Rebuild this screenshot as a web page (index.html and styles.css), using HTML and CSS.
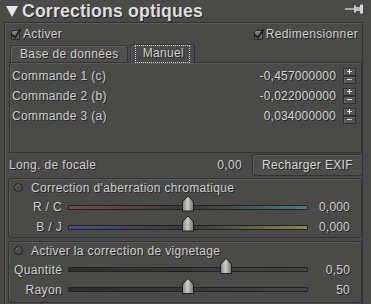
FILE: index.html
```html
<!DOCTYPE html>
<html lang="fr">
<head>
<meta charset="utf-8">
<link rel="stylesheet" href="styles.css">
</head>
<body>
<div class="app">
  <div class="title">
    <span class="tri"></span>
    <span class="title-text">Corrections optiques</span>
    <svg class="pin" width="20" height="10" viewBox="0 0 20 10">
      <line x1="0" y1="5" x2="10" y2="5" stroke="#cfcfcf" stroke-width="1.4"/>
      <rect x="10" y="3" width="6" height="4" fill="#bdbdbd"/>
      <rect x="15" y="0.5" width="3" height="9" rx="0.5" fill="#d6d6d6"/>
      <rect x="9" y="1.5" width="2" height="7" fill="#c8c8c8"/>
    </svg>
  </div>
  <div class="panel">
    <div class="checks">
      <label class="chk"><span class="box"></span>Activer</label>
      <label class="chk"><span class="box"></span>Redimensionner</label>
    </div>
    <div class="tabs">
      <div class="tab">Base de données</div>
      <div class="tab active"><span class="focus">Manuel</span></div>
    </div>
    <div class="tabpanel">
      <div class="crow"><span class="lbl">Commande 1 (c)</span><span class="val">-0,457000000</span><span class="spin"><span class="plus"></span><span class="minus"></span></span></div>
      <div class="crow"><span class="lbl">Commande 2 (b)</span><span class="val">-0,022000000</span><span class="spin"><span class="plus"></span><span class="minus"></span></span></div>
      <div class="crow"><span class="lbl">Commande 3 (a)</span><span class="val">0,034000000</span><span class="spin"><span class="plus"></span><span class="minus"></span></span></div>
    </div>
    <div class="focal">
      <span class="lbl">Long. de focale</span>
      <span class="fval">0,00</span>
      <span class="btn">Recharger EXIF</span>
    </div>
    <div class="frame">
      <div class="fhead"><span class="radio"></span>Correction d'aberration chromatique</div>
      <div class="srow">
        <span class="slbl">R / C</span>
        <span class="track rc"><span class="thumb" style="left: 50%"></span></span>
        <span class="sval">0,000</span>
      </div>
      <div class="srow">
        <span class="slbl">B / J</span>
        <span class="track bj"><span class="thumb" style="left: 50%"></span></span>
        <span class="sval">0,000</span>
      </div>
    </div>
    <div class="frame vig">
      <div class="fhead"><span class="radio"></span>Activer la correction de vignetage</div>
      <div class="srow">
        <span class="slbl left">Quantité</span>
        <span class="track gray"><span class="thumb" style="left: 66%"></span></span>
        <span class="sval">0,50</span>
      </div>
      <div class="srow">
        <span class="slbl">Rayon</span>
        <span class="track gray"><span class="thumb" style="left: 50%"></span></span>
        <span class="sval">50</span>
      </div>
    </div>
  </div>
</div>
</body>
</html>
```
FILE: styles.css
```css
* { box-sizing: border-box; }
html, body {
  margin: 0;
  padding: 0;
  background: #4a4a48;
}
body {
  width: 371px;
  height: 304px;
  overflow: hidden;
  font-family: "Liberation Sans", Arial, sans-serif;
  font-size: 12px;
  letter-spacing: 0.35px;
  color: #cfcfcf;
  text-shadow: 1px 1px 0 #262626;
}
.app {
  width: 371px;
  height: 304px;
  display: flex;
  flex-direction: column;
}
.title {
  height: 22px;
  display: flex;
  align-items: center;
  padding-left: 6px;
}
.tri {
  width: 0;
  height: 0;
  border-left: 6px solid transparent;
  border-right: 6px solid transparent;
  border-top: 11px solid #e6e6e6;
  margin-right: 4px;
  margin-top: 1px;
}
.title-text {
  font-weight: bold;
  font-size: 17.6px;
  color: #dedede;
  letter-spacing: 0.2px;
}
.pin {
  margin-left: auto;
  margin-right: 6px;
  margin-top: -4px;
}
.panel {
  flex: 1;
  margin: 0 8px 0 4px;
  border: 1px solid #333331;
  border-bottom: none;
  box-shadow: inset 1px 1px 0 #5a5a58;
  padding: 3px 0 0 3px;
  display: flex;
  flex-direction: column;
}
.checks {
  display: flex;
  justify-content: space-between;
  height: 16px;
  align-items: center;
  padding: 0 4px 0 3px;
  margin-bottom: 2px;
}
.chk {
  display: flex;
  align-items: center;
  gap: 3px;
}
.box {
  width: 9px;
  height: 10px;
  margin-top: 2px;
  border: 1px solid #2c2c2c;
  border-radius: 2px;
  background: linear-gradient(#8a8a88, #5e5e5c);
  position: relative;
}
.box::after {
  content: "";
  position: absolute;
  left: 1px;
  top: -4px;
  width: 4px;
  height: 9px;
  border-right: 2px solid #222;
  border-bottom: 2px solid #222;
  transform: rotate(35deg);
}
.tabs {
  display: flex;
  height: 18px;
  padding-left: 2px;
  align-items: flex-end;
}
.tab {
  height: 17px;
  border: 1px solid #333;
  border-bottom: none;
  border-radius: 3px 3px 0 0;
  background: #4e4e4c;
  box-shadow: inset 1px 1px 0 #606060;
  padding: 0 8px 0 9px;
  display: flex;
  align-items: center;
  color: #d0d0d0;
  margin-right: 2px;
}
.tab.active {
  height: 19px;
  margin-bottom: -1px;
  background: #4a4a48;
  position: relative;
  z-index: 1;
  padding: 0 4px;
}
.focus {
  border: 1px dotted #cfcfcf;
  padding: 1px 5px 2px 7px;
  line-height: 13px;
}
.tabpanel {
  height: 91px;
  margin-left: 1px;
  border: 1px solid #333;
  box-shadow: inset 1px 1px 0 #595957;
  padding: 3px 5px 0 2px;
  display: flex;
  flex-direction: column;
}
.crow {
  display: flex;
  align-items: center;
  height: 20px;
}
.crow .lbl { flex: 1; }
.val {
  color: #d6d6d6;
  margin-right: 7px;
  letter-spacing: 0.2px;
}
.spin {
  display: flex;
  flex-direction: column;
  width: 13px;
}
.spin span {
  height: 8px;
  border: 1px solid #2f2f2f;
  background: #555553;
  box-shadow: inset 1px 1px 0 #666;
  position: relative;
}
.spin span::before,
.spin span::after {
  content: "";
  position: absolute;
  background: #e2e2e2;
}
.spin span::before {
  left: 3px;
  top: 2px;
  width: 5px;
  height: 1px;
}
.spin .plus::after {
  left: 5px;
  top: 0;
  width: 1px;
  height: 5px;
}
.spin .minus::after { display: none; }
.focal {
  display: flex;
  align-items: center;
  height: 23px;
  padding: 0 0 0 1px;
}
.focal .lbl { flex: 1; }
.fval { margin-right: 10px; }
.btn {
  width: 111px;
  height: 22px;
  border: 1px solid #333;
  border-radius: 3px;
  background: #4d4d4b;
  box-shadow: inset 1px 1px 0 #5f5f5d;
  display: flex;
  align-items: center;
  justify-content: center;
  color: #d6d6d6;
  margin-right: -1px;
}
.frame {
  margin: 2px 0 0 0;
  height: 60px;
  border: 1px solid #333;
  border-radius: 3px;
  box-shadow: inset 1px 1px 0 #595957;
  padding: 0 4px 0 4px;
  display: flex;
  flex-direction: column;
}
.frame.vig { margin-top: 3px; height: 62px; }
.fhead {
  height: 17px;
  display: flex;
  align-items: center;
  gap: 8px;
  padding-left: 1px;
}
.radio {
  width: 9px;
  height: 9px;
  border: 1px solid #222;
  border-radius: 50%;
  background: #4e4e4c;
  box-shadow: inset 1px 1px 0 #6a6a68;
}
.srow {
  display: flex;
  align-items: center;
  height: 20px;
  padding-top: 2px;
}
.vig .srow { padding-top: 1px; }
.slbl {
  width: 49px;
  text-align: right;
}
.slbl.left { text-align: left; padding-left: 1px; }
.track {
  position: relative;
  margin-left: 6px;
  width: 240px;
  height: 5px;
  border: 1px solid #222;
  border-radius: 1px;
  background: #383836;
}
.track.rc { background: linear-gradient(90deg, #7a4c4c, #3d3d3c 45%, #3d3d3c 55%, #4f7a7a); }
.track.bj { background: linear-gradient(90deg, #4c4c8a, #3d3d3c 45%, #3d3d3c 55%, #8a8a4c); }
.track.gray { background: linear-gradient(90deg, #2d2d2c, #454543); }
.thumb {
  position: absolute;
  top: -10px;
  width: 12px;
  height: 16px;
  margin-left: -6px;
  background: #1e1e1e;
  clip-path: polygon(50% 0, 100% 38%, 100% 100%, 0 100%, 0 38%);
}
.thumb::after {
  content: "";
  position: absolute;
  left: 1px;
  top: 1px;
  right: 1px;
  bottom: 1px;
  background: linear-gradient(90deg, #8a8a88, #cacac8 45%, #7a7a78);
  clip-path: polygon(50% 0, 100% 38%, 100% 100%, 0 100%, 0 38%);
}
.sval {
  flex: 1;
  text-align: right;
  padding-right: 7px;
  letter-spacing: 0.2px;
}
```
